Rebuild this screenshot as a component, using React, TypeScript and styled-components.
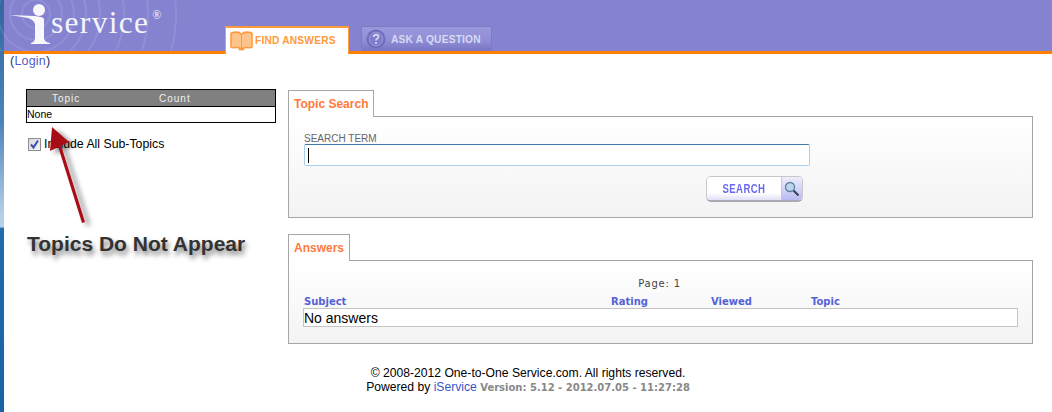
import { FC } from 'react';
import styled, { createGlobalStyle } from 'styled-components';

const Global = createGlobalStyle`
    html, body {
        margin: 0;
        padding: 0;
        background: #fff;
    }
    body {
        font-family: "Liberation Sans", Arial, sans-serif;
        color: #000;
    }
`

const Page = styled.div`
    position: relative;
    width: 1052px;
    height: 412px;
    overflow: hidden;
    display: flex;
`

const EdgeStrip = styled.div`
    width: 4px;
    flex: none;
    background: linear-gradient(#33669f 0, #4e84ba 30%, #b4cfe6 52%, #b9d2e8 55%, #1f6cae 55.5%, #1a62a6 100%);
`

const Main = styled.div`
    flex: 1;
    min-width: 0;
`

const Header = styled.div`
    position: relative;
    height: 51px;
    background: #8583d0;
    border-bottom: 3px solid #ff7f00;
    display: flex;
    align-items: flex-end;
    padding-left: 221px;
    gap: 12px;
`

const Rings = styled.svg`
    position: absolute;
    left: -4px;
    top: 0;
`

const LogoText = styled.div`
    position: absolute;
    left: 47px;
    top: 5px;
    font-family: "Liberation Serif", "Times New Roman", serif;
    font-size: 31.5px;
    line-height: 36px;
    letter-spacing: 1.3px;
    color: #f4f4fb;
`

const Registered = styled.sup`
    font-size: 12px;
    line-height: 0;
    vertical-align: 14px;
    margin-left: 3px;
    letter-spacing: 0;
`

const NavTab = styled.div<{ $active?: boolean }>`
    box-sizing: border-box;
    display: flex;
    align-items: center;
    font-size: 10.2px;
    font-weight: bold;
    letter-spacing: 0.2px;
    ${p => p.$active ? `
        width: 124px;
        height: 28px;
        margin-bottom: -3px;
        padding: 0 0 1px 4px;
        gap: 2px;
        background: #fff;
        border: 1px solid #ff9a3c;
        border-bottom: 0;
        border-top: 2px solid #ff9a3c;
        color: #ff9a3c;
    ` : `
        width: 131px;
        height: 25px;
        padding: 1px 0 0 4px;
        gap: 5px;
        background: linear-gradient(#9a98dc, #8f8dd6 60%, #7a78c4);
        border: 1px solid #7c7ac6;
        color: #d9d9f2;
    `}
`

const LoginLine = styled.div`
    font-size: 12.5px;
    line-height: 15px;
    padding-left: 6px;
    height: 35px;
    color: #1c2f6e;
    letter-spacing: 0.2px;
`

const NavLink = styled.a`
    color: #4f5bc8;
`

const Body = styled.div`
    display: flex;
    align-items: flex-start;
`

const LeftColumn = styled.div`
    width: 250px;
    margin-left: 22px;
    flex: none;
`

const TopicTable = styled.div`
    box-sizing: border-box;
    width: 250px;
    border: 1px solid #000;
`

const TopicHead = styled.div`
    background: #808080;
    border-bottom: 1px solid #000;
    height: 16px;
    display: flex;
    color: #f0f0f0;
    font-size: 10px;
    line-height: 17px;
    letter-spacing: 1px;
`

const HeadCell = styled.span<{ $width: number }>`
    width: ${p => p.$width}px;
    flex: none;
`

const TopicRow = styled.div`
    font-size: 10.5px;
    line-height: 15px;
    height: 15px;
`

const CheckRow = styled.label`
    display: flex;
    align-items: center;
    gap: 3px;
    margin: 13px 0 0 2px;
    font-size: 12.3px;
    height: 14px;
    padding-top: 1px;
`

const CheckBox = styled.span`
    box-sizing: border-box;
    width: 13px;
    height: 13px;
    border: 1px solid #8e8f8f;
    background: linear-gradient(135deg, #d8d8e4, #f4f4f8);
    display: flex;
    align-items: center;
    justify-content: center;
`

const RightColumn = styled.div`
    width: 745px;
    margin-left: 12px;
    padding-top: 1px;
    flex: none;
`

const Section = styled.div`
    margin-bottom: 16px;
`

const SectionTab = styled.div`
    box-sizing: border-box;
    display: inline-block;
    position: relative;
    z-index: 1;
    height: 27px;
    padding: 0 5px;
    background: #fff;
    border: 1px solid #a6a6a6;
    border-bottom: 0;
    color: #ff7a3c;
    font-size: 12px;
    font-weight: bold;
    line-height: 26px;
    vertical-align: top;
`

const SectionPanel = styled.div<{ $height: number }>`
    box-sizing: border-box;
    height: ${p => p.$height}px;
    margin-top: -1px;
    border: 1px solid #a6a6a6;
    background: linear-gradient(#fff, #f3f3f3);
    padding: 0 15px;
`

const FieldLabel = styled.div`
    font-size: 10px;
    line-height: 11px;
    color: #666;
    padding-top: 16px;
`

const SearchInput = styled.div`
    box-sizing: border-box;
    width: 506px;
    height: 22px;
    background: #fff;
    border: 1px solid #a8d0ec;
    border-top-color: #3f78a8;
    border-radius: 2px;
    padding: 3px;
`

const Caret = styled.span`
    display: block;
    width: 1px;
    height: 15px;
    background: #000;
`

const ButtonRow = styled.div`
    width: 499px;
    display: flex;
    justify-content: flex-end;
    margin-top: 10px;
`

const SearchButton = styled.button`
    box-sizing: border-box;
    width: 97px;
    height: 26px;
    padding: 0;
    display: flex;
    border: 1px solid #c8c8c8;
    border-bottom: 2px solid #a9a9b4;
    border-radius: 5px;
    overflow: hidden;
    background: #fff;
`

const ButtonLabel = styled.span`
    width: 74px;
    height: 100%;
    background: linear-gradient(#fff 70%, #dfe0f7);
    text-align: center;
`

const ButtonText = styled.span`
    display: inline-block;
    transform: scaleX(0.74);
    color: #6a6af0;
    font-family: "Liberation Sans", Arial, sans-serif;
    font-size: 13px;
    font-weight: bold;
    letter-spacing: 0.5px;
    line-height: 23px;
`

const ButtonIcon = styled.span`
    flex: 1;
    border-left: 1px solid #c8c8dc;
    background: linear-gradient(#eeeefc, #b8baf0);
    display: flex;
    align-items: center;
    justify-content: center;
`

const PageInfo = styled.div`
    font-family: "DejaVu Sans", Verdana, sans-serif;
    font-size: 10px;
    line-height: 12px;
    color: #444;
    text-align: center;
    padding-top: 17px;
    margin-right: 2px;
    letter-spacing: 0.8px;
`

const ColumnHeads = styled.div`
    display: flex;
    margin-top: 5px;
    height: 13px;
    font-family: "DejaVu Sans", Verdana, sans-serif;
    font-size: 10px;
    font-weight: bold;
    line-height: 13px;
    color: #5462d6;
`

const ColumnHead = styled.span<{ $width: number }>`
    width: ${p => p.$width}px;
    flex: none;
`

const AnswerRow = styled.div`
    box-sizing: border-box;
    width: 715px;
    height: 19px;
    margin-left: -1px;
    background: #fff;
    border: 1px solid #c4c4c4;
    font-size: 14px;
    line-height: 18px;
`

const Footer = styled.div`
    margin-top: 6px;
    text-align: center;
    font-size: 12.15px;
    line-height: 14px;
`

const FooterLink = styled.a`
    color: #3a55c8;
`

const VersionText = styled.span`
    font-family: "DejaVu Sans", Verdana, sans-serif;
    font-size: 10px;
    font-weight: bold;
    color: #888;
`

const ArrowLayer = styled.svg`
    position: absolute;
    left: 0;
    top: 0;
    pointer-events: none;
`

const Callout = styled.div`
    position: absolute;
    left: 27px;
    top: 232px;
    font-size: 21px;
    font-weight: bold;
    line-height: 24px;
    color: #333;
    text-shadow: 2px 4px 5px rgba(0, 0, 0, 0.5);
`

const LogoMark: FC = () => (
    <Rings width="330" height="51" viewBox="0 0 330 51">
        <g fill="none" stroke="#fff" strokeOpacity="0.1" strokeWidth="2">
            <circle cx="36" cy="14" r="14" />
            <circle cx="36" cy="14" r="26" />
            <circle cx="36" cy="14" r="38" />
            <circle cx="36" cy="14" r="50" />
            <circle cx="36" cy="14" r="64" />
            <circle cx="36" cy="14" r="88" />
            <circle cx="36" cy="14" r="112" />
            <circle cx="36" cy="14" r="140" />
        </g>
        <circle cx="39" cy="10" r="6" fill="#f7f7fc" />
        <path d="M10 15 L34 16 Q44 17 44 19 L44 38 Q44 42 50 43 L50 44 L31 44 L31 43 Q35 42 35 38 L35 24 Q34 20 28 18 Z" fill="#f7f7fc" />
    </Rings>
)

const BookIcon: FC = () => (
    <svg width="23" height="22" viewBox="0 0 24 22">
        <path d="M1 4 Q1 2 4 2 Q9 1 12 4 Q15 1 20 2 Q23 2 23 4 L23 17 Q23 18 21 18 Q15 17 13 19 L11 19 Q9 17 3 18 Q1 18 1 17 Z" fill="#ffc48c" stroke="#ff9a3c" strokeWidth="1.6" />
        <path d="M12 4 L12 19" stroke="#ff9a3c" strokeWidth="1" />
        <path d="M9 20 L15 20" stroke="#ff9a3c" strokeWidth="1.5" />
    </svg>
)

const QuestionIcon: FC = () => (
    <svg width="20" height="20" viewBox="0 0 20 20">
        <circle cx="10" cy="10" r="9.5" fill="#6f6dbd" />
        <circle cx="10" cy="10" r="6.8" fill="#7f7dcb" stroke="#a5a4e0" strokeWidth="0.8" />
        <path d="M7.6 8 Q7.8 5.6 10.2 5.6 Q12.6 5.8 12.5 7.8 Q12.4 9 11 9.8 Q10 10.4 10 11.6" fill="none" stroke="#d9d9f2" strokeWidth="1.7" />
        <circle cx="10" cy="14" r="1.1" fill="#d9d9f2" />
    </svg>
)

const MagnifierIcon: FC = () => (
    <svg width="16" height="16" viewBox="0 0 16 16">
        <path d="M9 9 L14.5 14.5" stroke="#2f3f55" strokeWidth="2" />
        <circle cx="6" cy="6" r="4.5" fill="#bcd8ee" stroke="#5f7f9f" strokeWidth="1.3" />
    </svg>
)

const App: FC = () => {
    return (
        <Page>
            <Global />
            <EdgeStrip />
            <Main>
                <Header>
                    <LogoMark />
                    <LogoText>service<Registered>®</Registered></LogoText>
                    <NavTab $active><BookIcon />FIND ANSWERS</NavTab>
                    <NavTab><QuestionIcon />ASK A QUESTION</NavTab>
                </Header>
                <LoginLine>(<NavLink>Login</NavLink>)</LoginLine>
                <Body>
                    <LeftColumn>
                        <TopicTable>
                            <TopicHead>
                                <HeadCell $width={25} />
                                <HeadCell $width={107}>Topic</HeadCell>
                                <HeadCell $width={40}>Count</HeadCell>
                            </TopicHead>
                            <TopicRow>None</TopicRow>
                        </TopicTable>
                        <CheckRow>
                            <CheckBox>
                                <svg width="11" height="11" viewBox="0 0 11 11">
                                    <path d="M2 5.5 L4.5 8.5 L9 1.5" fill="none" stroke="#3d4ea8" strokeWidth="2" />
                                </svg>
                            </CheckBox>
                            Include All Sub-Topics
                        </CheckRow>
                    </LeftColumn>
                    <RightColumn>
                        <Section>
                            <SectionTab>Topic Search</SectionTab>
                            <SectionPanel $height={102}>
                                <FieldLabel>SEARCH TERM</FieldLabel>
                                <SearchInput><Caret /></SearchInput>
                                <ButtonRow>
                                    <SearchButton>
                                        <ButtonLabel><ButtonText>SEARCH</ButtonText></ButtonLabel>
                                        <ButtonIcon><MagnifierIcon /></ButtonIcon>
                                    </SearchButton>
                                </ButtonRow>
                            </SectionPanel>
                        </Section>
                        <Section>
                            <SectionTab>Answers</SectionTab>
                            <SectionPanel $height={84}>
                                <PageInfo>Page: 1</PageInfo>
                                <ColumnHeads>
                                    <ColumnHead $width={307}>Subject</ColumnHead>
                                    <ColumnHead $width={100}>Rating</ColumnHead>
                                    <ColumnHead $width={100}>Viewed</ColumnHead>
                                    <ColumnHead $width={100}>Topic</ColumnHead>
                                </ColumnHeads>
                                <AnswerRow>No answers</AnswerRow>
                            </SectionPanel>
                        </Section>
                    </RightColumn>
                </Body>
                <Footer>
                    © 2008-2012 One-to-One Service.com. All rights reserved.<br />
                    Powered by <FooterLink>iService</FooterLink> <VersionText>Version: 5.12 - 2012.07.05 - 11:27:28</VersionText>
                </Footer>
            </Main>
            <ArrowLayer width="1052" height="412" viewBox="0 0 1052 412">
                <defs>
                    <filter id="arrowShadow" x="-50%" y="-20%" width="200%" height="140%">
                        <feDropShadow dx="5" dy="3" stdDeviation="2.5" floodColor="#000" floodOpacity="0.45" />
                    </filter>
                </defs>
                <g filter="url(#arrowShadow)">
                    <path d="M85 222 L60 142 L57 143 L82 223 Z" fill="#a80f17" />
                    <path d="M52 127 L50 151 L69 142 Z" fill="#a80f17" />
                </g>
            </ArrowLayer>
            <Callout>Topics Do Not Appear</Callout>
        </Page>
    );
};

export default App;
